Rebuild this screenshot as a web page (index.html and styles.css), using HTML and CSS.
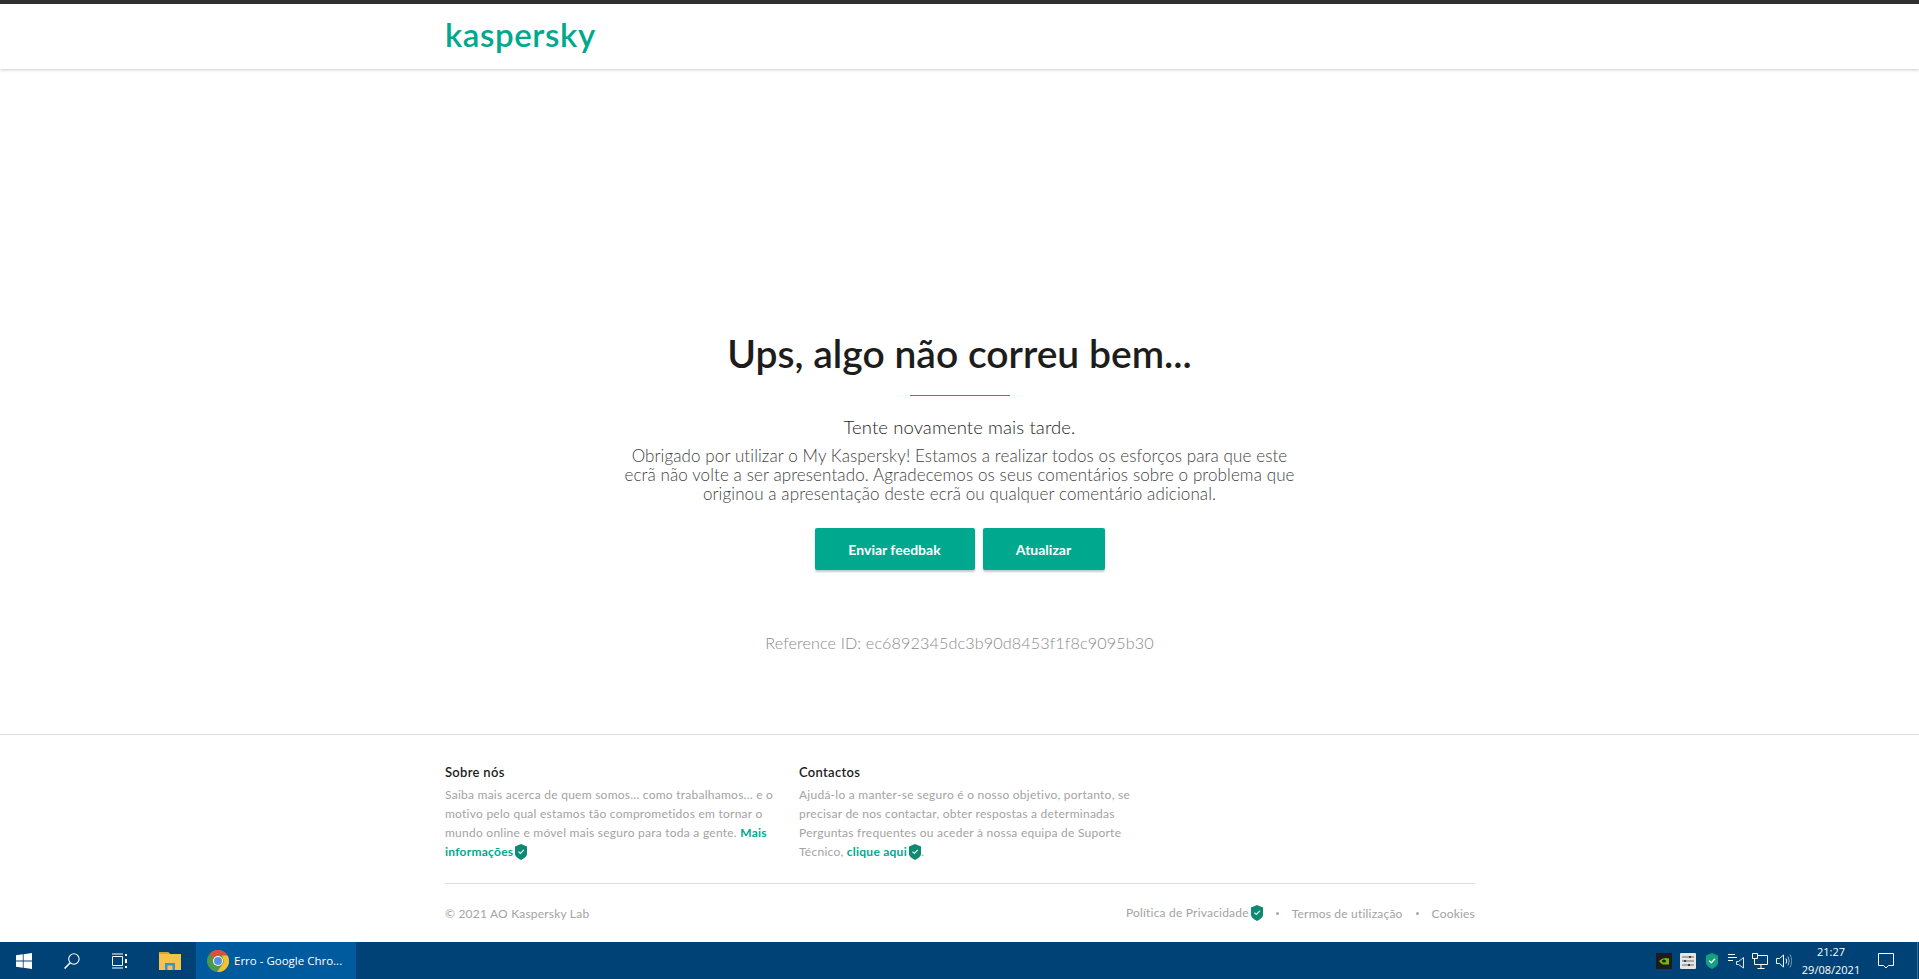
FILE: index.html
```html
<!DOCTYPE html>
<html lang="pt">
<head>
    <meta charset="UTF-8">
    <title>Erro</title>
    <link rel="stylesheet" href="styles.css">
</head>
<body>
    <svg class="defs" width="0" height="0">
        <symbol id="shield" viewBox="0 0 12 16">
            <path d="M6 0 L12 2.5 V10 Q12 13 6 16 Q0 13 0 10 V2.5 Z" fill="#0f8a72"/>
            <path d="M3.4 7.6 L5.3 9.5 L8.8 5.8" fill="none" stroke="#e8f5f1" stroke-width="1.2"/>
        </symbol>
    </svg>

    <header class="top">
        <div class="wrap">
            <span class="logo">kaspersky</span>
        </div>
    </header>

    <main class="error">
        <h1>Ups, algo não correu bem...</h1>
        <div class="rule"></div>
        <p class="lead">Tente novamente mais tarde.</p>
        <p class="msg">Obrigado por utilizar o My Kaspersky! Estamos a realizar todos os esforços para que este<br>ecrã não volte a ser apresentado. Agradecemos os seus comentários sobre o problema que<br>originou a apresentação deste ecrã ou qualquer comentário adicional.</p>
        <div class="actions">
            <button class="btn btn-feedback">Enviar feedbak</button>
            <button class="btn btn-refresh">Atualizar</button>
        </div>
        <p class="ref">Reference ID: ec6892345dc3b90d8453f1f8c9095b30</p>
    </main>

    <footer class="foot">
        <div class="wrap">
            <div class="cols">
                <div class="col">
                    <h4>Sobre nós</h4>
                    <p>Saiba mais acerca de quem somos... como trabalhamos... e o<br>motivo pelo qual estamos tão comprometidos em tornar o<br>mundo online e móvel mais seguro para toda a gente. <a href="#">Mais<br>informações</a><svg class="shield"><use href="#shield"/></svg></p>
                </div>
                <div class="col">
                    <h4>Contactos</h4>
                    <p>Ajudá-lo a manter-se seguro é o nosso objetivo, portanto, se<br>precisar de nos contactar, obter respostas a determinadas<br>Perguntas frequentes ou aceder à nossa equipa de Suporte<br>Técnico, <a href="#">clique aqui</a><svg class="shield"><use href="#shield"/></svg>.</p>
                </div>
            </div>
            <div class="legal">
                <span>© 2021 AO Kaspersky Lab</span>
                <nav class="legal-links">
                    <span>Política de Privacidade<svg class="shield"><use href="#shield"/></svg></span>
                    <i class="dot"></i>
                    <span>Termos de utilização</span>
                    <i class="dot"></i>
                    <span>Cookies</span>
                </nav>
            </div>
        </div>
    </footer>

    <div class="taskbar">
        <div class="slot">
            <svg width="16" height="16" viewBox="0 0 16 16" fill="#fff"><path d="M0 2.3 L6.8 1.3 V7.6 H0 Z M7.6 1.2 L16 0 V7.6 H7.6 Z M0 8.4 H6.8 V14.7 L0 13.7 Z M7.6 8.4 H16 V16 L7.6 14.8 Z"/></svg>
        </div>
        <div class="slot">
            <svg width="16" height="16" viewBox="0 0 16 16" fill="none" stroke="#fff" stroke-width="1.1"><circle cx="9.9" cy="6" r="5.2"/><path d="M6.2 9.8 L0.6 15.5" stroke-width="1.5"/></svg>
        </div>
        <div class="slot">
            <svg width="16" height="16" viewBox="0 0 16 16" fill="none" stroke="#fff"><path d="M0.5 3.5 H10.5 V12.5 H0.5 Z M0 1 H11 M0 15 H11"/><path d="M14 1 V3 M14 6 V10 M14 13 V15" stroke-width="2"/></svg>
        </div>
        <div class="slot slot-wide">
            <svg width="22" height="18" viewBox="0 0 22 18"><path d="M0 0 H9 L11 2 H22 V18 H0 Z" fill="#f4c24d"/><path d="M0 0 H9 L11 2 H0 Z" fill="#d9a32e"/><path d="M6 18 V11 H16 V18 H13.5 V13.5 H8.5 V18 Z" fill="#3d8fd6"/></svg>
        </div>
        <div class="task-app">
            <svg width="22" height="22" viewBox="0 0 22 22">
                <circle cx="11" cy="11" r="11" fill="#4a9a4a"/>
                <path d="M11 0 A11 11 0 0 1 20.5 5.5 L11 5.5 A5.5 5.5 0 0 0 6.2 8.3 L2.7 3.7 A11 11 0 0 1 11 0 Z" fill="#d9503f"/>
                <path d="M20.5 5.5 A11 11 0 0 1 10 22 L15.8 13.8 A5.5 5.5 0 0 0 15.8 8.2 L15 5.5 Z" fill="#f2c230"/>
                <circle cx="11" cy="11" r="5" fill="#fff"/>
                <circle cx="11" cy="11" r="4" fill="#5a8fe0"/>
            </svg>
            <span>Erro - Google Chro...</span>
        </div>
        <div class="tray">
            <div class="slot-s">
                <svg width="16" height="16" viewBox="0 0 16 16"><rect width="16" height="16" fill="#1c1c1c"/><path d="M3 8 Q7.5 3.5 13 5.5 V11.5 H7 Q4.5 10.5 3 8 Z" fill="#76b900"/><ellipse cx="8" cy="8" rx="2" ry="1.5" fill="#1c1c1c"/></svg>
            </div>
            <div class="slot-s">
                <svg width="16" height="16" viewBox="0 0 16 16"><rect width="16" height="16" rx="1" fill="#e6e6e6"/><path d="M2 4 H14 M2 8 H14 M2 12 H14" stroke="#666"/><path d="M10 3 V5 M5 7 V9 M9 11 V13" stroke="#222" stroke-width="1.5"/></svg>
            </div>
            <div class="slot-s">
                <svg width="12" height="16" viewBox="0 0 12 16"><path d="M6 0 L12 2.5 V10 Q12 13 6 16 Q0 13 0 10 V2.5 Z" fill="#12a07f"/><path d="M3.2 7.6 L5.3 9.8 L9 5.8" fill="none" stroke="#fff" stroke-width="1.3"/></svg>
            </div>
            <div class="slot-s">
                <svg width="16" height="16" viewBox="0 0 16 16" fill="none" stroke="#fff"><path d="M0 1.5 H7 M0 4.5 H9 M0 7.5 H5"/><path d="M8.5 8.5 H10.5 L15.5 4.5 V15 L10.5 11.5 H8.5 Z" stroke="#dfe8ee"/></svg>
            </div>
            <div class="slot-s">
                <svg width="16" height="16" viewBox="0 0 16 16" fill="none" stroke="#fff"><path d="M2.5 2.5 H15.5 V11.5 H2.5 Z"/><path d="M0.5 0.5 H5.5 V5.5 H0.5 Z" fill="#004275"/><path d="M9 11.5 V15 M5.5 15.5 H12.5"/></svg>
            </div>
            <div class="slot-s">
                <svg width="16" height="16" viewBox="0 0 16 16" fill="none" stroke="#fff"><path d="M0.5 5.5 H3.5 L7.5 2 V14 L3.5 10.5 H0.5 Z"/><path d="M10 5.5 Q11.5 8 10 10.5"/><path d="M12 3.5 Q14.5 8 12 12.5" stroke="#9db8cc"/><path d="M14 1.5 Q17.5 8 14 14.5" stroke="#6f96b2"/></svg>
            </div>
            <div class="clock">
                <span>21:27</span>
                <span>29/08/2021</span>
            </div>
            <div class="notify">
                <svg width="16" height="16" viewBox="0 0 16 16" fill="none" stroke="#fff"><path d="M0.5 0.5 H15.5 V12.5 H10.5 L8 15 L5.5 12.5 H0.5 Z"/></svg>
            </div>
            <div class="desk-edge"></div>
        </div>
    </div>
</body>
</html>
```

FILE: styles.css
```css
* {
    box-sizing: border-box;
}

html, body {
    height: 100%;
    margin: 0;
    overflow: hidden;
}

body {
    display: flex;
    flex-direction: column;
    background: #ffffff;
    font-family: Lato, "Open Sans", sans-serif;
    color: #1d1d1b;
}

.defs {
    position: absolute;
}

.wrap {
    width: 1030px;
    margin-left: 445px;
}

.top {
    height: 69px;
    border-top: 4px solid #2f2f2f;
    box-shadow: 0 1px 3px rgba(0, 0, 0, 0.2);
}

.logo {
    display: block;
    margin-top: 10px;
    font-size: 33px;
    line-height: 40px;
    font-weight: 600;
    letter-spacing: 0.6px;
    color: #00a88e;
}

.error {
    flex: 1;
    display: flex;
    flex-direction: column;
    align-items: center;
    padding-top: 258px;
    text-align: center;
}

.error h1 {
    margin: 0;
    font-size: 39px;
    line-height: 52px;
    font-weight: 600;
}

.rule {
    width: 100px;
    height: 1px;
    margin-top: 16px;
    background: #00a88e;
}

.lead {
    margin: 20px 0 0;
    font-size: 18.5px;
    line-height: 22px;
    font-weight: 300;
    letter-spacing: 0.1px;
    color: #1d1d1b;
}

.msg {
    margin: 8px 0 0;
    font-size: 17px;
    line-height: 19px;
    font-weight: 300;
    letter-spacing: 0.1px;
    color: #3f3f3f;
}

.actions {
    display: flex;
    gap: 8px;
    margin-top: 25px;
}

.btn {
    height: 42px;
    border: none;
    border-radius: 2px;
    background: #00a88e;
    color: #ffffff;
    font-family: inherit;
    font-size: 14px;
    font-weight: 700;
    box-shadow: 0 2px 2px rgba(0, 60, 50, 0.25);
}

.btn-feedback {
    width: 160px;
}

.btn-refresh {
    width: 122px;
}

.ref {
    margin: 62px 0 0;
    font-size: 16.2px;
    line-height: 22px;
    font-weight: 300;
    letter-spacing: 0.1px;
    color: #8c8c8c;
}

.foot {
    height: 208px;
    border-top: 1px solid #dcdcdc;
    padding-top: 28px;
}

.cols {
    display: flex;
    height: 121px;
    border-bottom: 1px solid #dcdcdc;
}

.col {
    width: 354px;
}

.col h4 {
    margin: 0;
    font-size: 13px;
    line-height: 18px;
    font-weight: 600;
    letter-spacing: 0.3px;
}

.col p {
    margin: 4px 0 0;
    font-size: 12px;
    line-height: 19px;
    letter-spacing: 0.25px;
    color: #a3a3a3;
}

.col a {
    color: #00a88e;
    font-weight: 700;
    text-decoration: none;
}

.shield {
    width: 12px;
    height: 16px;
    margin-left: 2px;
    vertical-align: -4px;
}

.legal {
    display: flex;
    justify-content: space-between;
    align-items: center;
    height: 58px;
    font-size: 12px;
    letter-spacing: 0.2px;
    color: #a3a3a3;
}

.legal-links {
    display: flex;
    align-items: center;
    gap: 13px;
}

.dot {
    width: 3px;
    height: 3px;
    border-radius: 50%;
    background: #a8a8a8;
}

.taskbar {
    display: flex;
    height: 37px;
    flex-shrink: 0;
    background: #004275;
    color: #ffffff;
    font-family: "Open Sans", sans-serif;
    font-size: 11.5px;
}

.slot {
    width: 48px;
    display: flex;
    align-items: center;
    justify-content: center;
}

.slot-wide {
    width: 52px;
}

.task-app {
    width: 160px;
    display: flex;
    align-items: center;
    gap: 5px;
    padding-left: 11px;
    background: #005a9e;
}

.tray {
    margin-left: auto;
    display: flex;
    align-items: center;
    height: 100%;
}

.slot-s {
    width: 24px;
    display: flex;
    align-items: center;
    justify-content: center;
}

.clock {
    width: 70px;
    display: flex;
    flex-direction: column;
    align-items: center;
    font-size: 11px;
    line-height: 18px;
}

.notify {
    width: 40px;
    display: flex;
    justify-content: center;
}

.desk-edge {
    width: 12px;
    height: 100%;
    border-right: 1px solid #3d6f96;
    margin-right: 1px;
}
```
